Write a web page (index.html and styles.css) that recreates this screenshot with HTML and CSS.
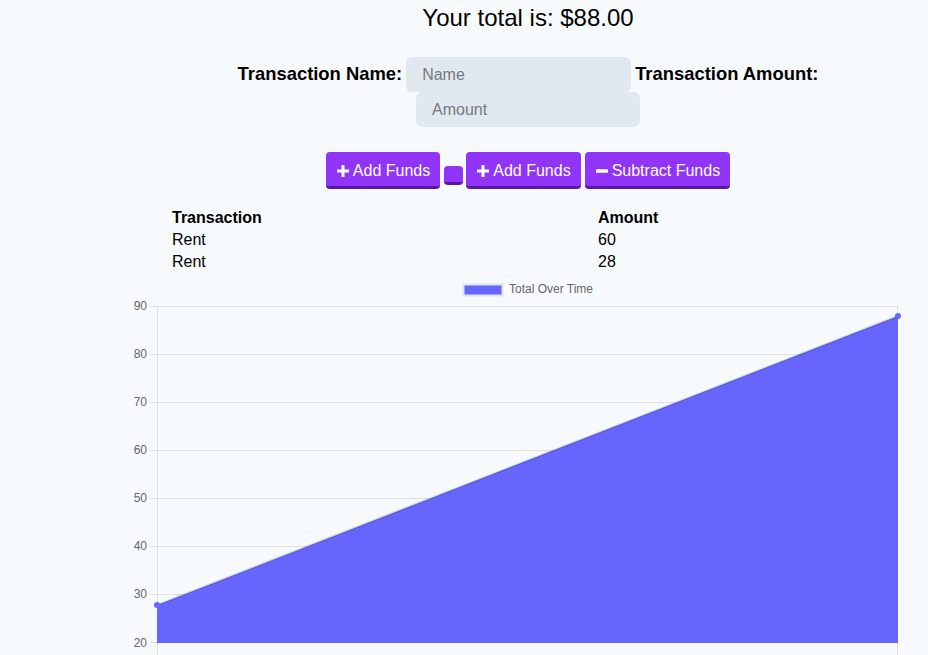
FILE: index.html
```html
<!DOCTYPE html>
<html>
<head>
<meta charset="utf-8">
<link rel="stylesheet" href="styles.css">
</head>
<body>
<div class="wrap">
  <h1 class="total">Your total is: $<span>88.00</span></h1>
  <form class="form">
    <label class="lbl">Transaction Name:</label>
    <input class="field name" type="text" placeholder="Name">
    <label class="lbl">Transaction Amount:</label>
    <input class="field amount" type="number" placeholder="Amount">
  </form>
  <div class="buttons">
    <button class="btn" type="button"><svg class="ico" viewBox="0 0 12 12"><path d="M4.5 0h3v4.5H12v3H7.5V12h-3V7.5H0v-3h4.5z" fill="#fff"/></svg>Add Funds</button>
    <button class="btn empty" type="button"></button>
    <button class="btn" type="button"><svg class="ico" viewBox="0 0 12 12"><path d="M4.5 0h3v4.5H12v3H7.5V12h-3V7.5H0v-3h4.5z" fill="#fff"/></svg>Add Funds</button>
    <button class="btn" type="button"><svg class="ico" viewBox="0 0 12 12"><rect x="0" y="4.3" width="12" height="3.4" rx="0.5" fill="#fff"/></svg>Subtract Funds</button>
  </div>
  <div class="table">
    <div class="th">Transaction</div><div class="th">Amount</div>
    <div class="td">Rent</div><div class="td">60</div>
    <div class="td">Rent</div><div class="td">28</div>
  </div>
  <div class="chart">
    <svg width="800" height="380" viewBox="128 278 800 380">
      <rect x="463.5" y="284.5" width="39" height="11" fill="#6666ff" stroke="#dfe3ee" stroke-width="2"/>
      <text x="509" y="293" class="lt">Total Over Time</text>
      <g stroke="#dde1e5" stroke-width="1">
        <line x1="149" y1="306.5" x2="898" y2="306.5"/>
        <line x1="149" y1="354.5" x2="898" y2="354.5"/>
        <line x1="149" y1="402.5" x2="898" y2="402.5"/>
        <line x1="149" y1="450.5" x2="898" y2="450.5"/>
        <line x1="149" y1="498.5" x2="898" y2="498.5"/>
        <line x1="149" y1="546.5" x2="898" y2="546.5"/>
        <line x1="149" y1="594.5" x2="898" y2="594.5"/>
        <line x1="149" y1="642.5" x2="898" y2="642.5"/>
        <line x1="157.5" y1="306" x2="157.5" y2="660"/>
        <line x1="897.5" y1="306" x2="897.5" y2="660"/>
      </g>
      <g class="yt" text-anchor="end">
        <text x="147" y="310">90</text>
        <text x="147" y="358">80</text>
        <text x="147" y="406">70</text>
        <text x="147" y="454">60</text>
        <text x="147" y="502">50</text>
        <text x="147" y="550">40</text>
        <text x="147" y="598">30</text>
        <text x="147" y="647">20</text>
      </g>
      <polygon points="157,605 898,316 898,643 157,643" fill="#6666ff"/>
      <line x1="157" y1="605" x2="898" y2="316" stroke="rgba(0,0,0,0.12)" stroke-width="2.5"/>
      <circle cx="157" cy="605" r="3" fill="#6666ff"/>
      <circle cx="898" cy="316" r="3" fill="#6666ff"/>
    </svg>
  </div>
</div>
</body>
</html>
```
FILE: styles.css
```css
html, body {
  margin: 0;
  padding: 0;
  background: #f7fafc;
  font-family: "Liberation Sans", Arial, sans-serif;
  color: #000;
  overflow: hidden;
}
.wrap {
  margin-left: 128px;
  width: 800px;
}
.total {
  margin: 4px 0 0;
  font-size: 24px;
  font-weight: normal;
  line-height: 28px;
  text-align: center;
}
.form {
  margin-top: 25px;
  display: flex;
  flex-wrap: wrap;
  justify-content: center;
  align-items: center;
  column-gap: 4px;
}
.lbl {
  font-weight: bold;
  font-size: 18.4px;
  margin-top: -1px;
}
.field {
  box-sizing: border-box;
  height: 35px;
  width: 225px;
  border: none;
  border-radius: 6px;
  background: #e2e8f0;
  padding: 0 15px 0 16px;
  font-family: "Liberation Sans", Arial, sans-serif;
  font-size: 16px;
  outline: none;
}
.field.amount {
  width: 224px;
  -moz-appearance: textfield;
}
.field.amount::-webkit-outer-spin-button,
.field.amount::-webkit-inner-spin-button {
  -webkit-appearance: none;
  margin: 0;
}
.field::placeholder {
  color: #74787f;
}
.buttons {
  margin-top: 25px;
  text-align: center;
  font-size: 0;
}
.btn {
  display: inline-block;
  box-sizing: border-box;
  margin: 0 2px;
  padding: 10px 10px 6px 11px;
  border: none;
  border-bottom: 3px solid #5a16a8;
  border-radius: 4px;
  background: #9034f7;
  color: #fff;
  font-family: "Liberation Sans", Arial, sans-serif;
  font-size: 16px;
  line-height: 18px;
  vertical-align: baseline;
}
.btn.empty {
  width: 19px;
  height: 19px;
  padding: 0;
  margin: 0 1px 0 2px;
  vertical-align: -6px;
}
.ico {
  width: 12px;
  height: 12px;
  margin-right: 4px;
  vertical-align: -1px;
}
.table {
  margin: 18px 0 0 44px;
  display: grid;
  grid-template-columns: 426px auto;
  font-size: 16px;
  line-height: 22px;
}
.th {
  font-weight: bold;
}
.chart {
  margin-top: 5px;
}
.chart svg {
  display: block;
}
.lt {
  font-family: "Liberation Sans", Arial, sans-serif;
  font-size: 12px;
  fill: #666;
}
.yt text {
  font-family: "Liberation Sans", Arial, sans-serif;
  font-size: 12px;
  fill: #666;
}
```
